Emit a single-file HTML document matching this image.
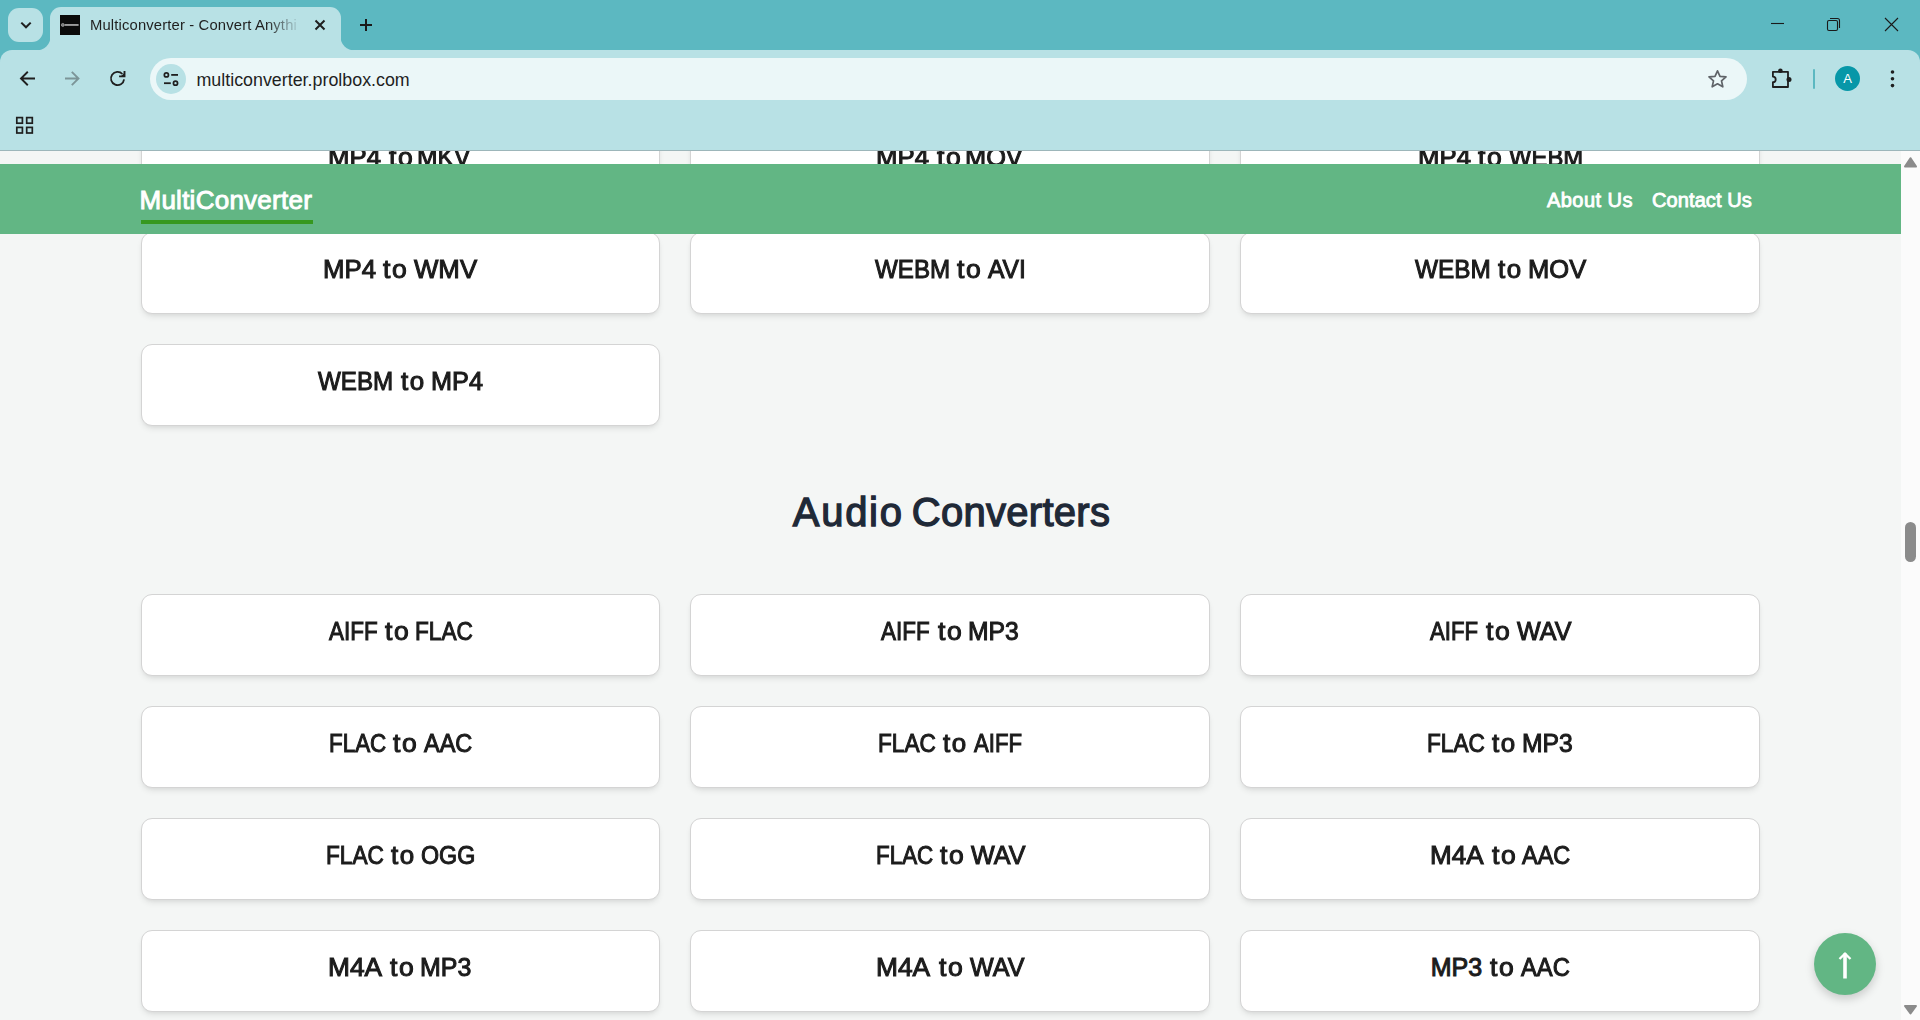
<!DOCTYPE html>
<html>
<head>
<meta charset="utf-8">
<style>
*{box-sizing:border-box;margin:0;padding:0}
html,body{width:1920px;height:1020px;overflow:hidden}
body{position:relative;font-family:"Liberation Sans",sans-serif;background:#f4f6f5}
.abs{position:absolute}
svg{position:absolute;overflow:visible}
#tabstrip{left:0;top:0;width:1920px;height:70px;background:#5cb8c1}
#dd{left:8px;top:8px;width:35px;height:34px;border-radius:11px;background:#b8e1e5}
#tab{left:50px;top:7px;width:291px;height:44px;background:#b8e1e5;border-radius:11px 11px 0 0}
#toolbar{left:0;top:50px;width:1920px;height:100px;background:#b8e1e5;border-radius:12px 12px 0 0}
#sep{left:0;top:150px;width:1920px;height:1px;background:#9db6ba}
#page{left:0;top:151px;width:1901px;height:869px;background:#f4f6f5;overflow:hidden}
#sb{left:1901px;top:151px;width:19px;height:869px;background:#fbfbfb}
#omni{left:150px;top:58px;width:1597px;height:42px;border-radius:21px;background:#ebf7f8}
#tune{left:156px;top:64px;width:30px;height:30px;border-radius:15px;background:#b8e1e5}
#url{left:196.5px;top:69px;font-size:17.85px;color:#1f1f1f;line-height:22px;white-space:nowrap}
#tabtitle{left:90px;top:16px;font-size:14.8px;letter-spacing:0.15px;color:#1f1f1f;line-height:18px;white-space:nowrap;width:212px;overflow:hidden;
  -webkit-mask-image:linear-gradient(to right,#000 0,#000 176px,transparent 211px);mask-image:linear-gradient(to right,#000 0,#000 176px,transparent 211px)}
#fav{left:60px;top:15px;width:20px;height:20px;background:#0b0b0b}
#avatar{left:1835px;top:66px;width:25px;height:25px;border-radius:50%;background:#0797a8;color:#fff;font-size:13px;line-height:25px;text-align:center}
#tsep{left:1813px;top:69px;width:2px;height:20px;background:#5cb8c1;border-radius:1px}
.card{position:absolute;background:#fff;border:1px solid #d4d4d4;border-radius:11px;box-shadow:0 4px 6px -1px rgba(0,0,0,0.08),0 2px 4px -2px rgba(0,0,0,0.08);height:82px;display:flex;align-items:center;justify-content:center;font-size:25px;font-weight:400;-webkit-text-stroke:0.6px #1c1c1c;color:#1c1c1c;white-space:nowrap;padding-bottom:7px}
.w{position:absolute;top:21px;line-height:30px;transform-origin:0 0;white-space:pre;-webkit-text-stroke:1px #1c1c1c}
.c1{left:141px;width:519px}
.c2{left:690px;width:520px}
.c3{left:1240px;width:520px}
#nav{left:0;top:13px;width:1901px;height:70px;background:#62b684}
#brand{left:139.5px;top:21px;font-size:26px;letter-spacing:0.25px;font-weight:400;-webkit-text-stroke:0.95px #fff;color:#fff;line-height:30px;white-space:nowrap}
#brandline{left:141px;top:56px;width:172px;height:4px;background:#36981f}
.navlink{top:24px;font-size:20px;letter-spacing:0.45px;font-weight:400;-webkit-text-stroke:0.85px #fff;color:#fff;line-height:24px;white-space:nowrap}
#h2{left:1px;top:338px;letter-spacing:0.5px;word-spacing:-3.5px;width:1901px;text-align:center;font-size:40px;font-weight:400;-webkit-text-stroke:1.3px #1f2937;color:#1f2937;line-height:46px}
#totop{left:1814px;top:782px;width:62px;height:62px;border-radius:50%;background:#62b684;box-shadow:0 4px 10px rgba(0,0,0,0.18)}
</style>
</head>
<body>
<div id="tabstrip" class="abs"></div>
<div id="dd" class="abs"></div>
<svg width="1920" height="50" style="left:0;top:0">
  <!-- chevron -->
  <path d="M21.3 22.6 L26 27.3 L30.7 22.6" fill="none" stroke="#1f1f1f" stroke-width="2"/>
  <!-- window controls -->
  <path d="M1771 23.5 H1784" stroke="#1a1a1a" stroke-width="1.1"/>
  <rect x="1827.5" y="20.5" width="10" height="10" rx="1.5" fill="none" stroke="#1a1a1a" stroke-width="1.1"/>
  <path d="M1830 18.5 H1837.5 Q1839.5 18.5 1839.5 20.5 V28" fill="none" stroke="#1a1a1a" stroke-width="1.1"/>
  <path d="M1885 18 L1898 31 M1898 18 L1885 31" stroke="#1a1a1a" stroke-width="1.1"/>
  <!-- plus -->
  <path d="M366 19 V31 M360 25 H372" stroke="#1a1a1a" stroke-width="2"/>
</svg>
<div id="toolbar" class="abs"></div>
<div id="tab" class="abs"></div>
<svg width="400" height="60" style="left:0;top:0">
  <!-- outward curves at tab bottom -->
  <path d="M36 50.5 A14 14 0 0 0 50.5 36 V50.5 Z" fill="#b8e1e5"/>
  <path d="M340.5 36 A14 14 0 0 0 355 50.5 H340.5 Z" fill="#b8e1e5"/>
  <!-- close x -->
  <path d="M315.5 20.5 L324.5 29.5 M324.5 20.5 L315.5 29.5" stroke="#1f1f1f" stroke-width="2"/>
</svg>
<div id="fav" class="abs"></div>
<svg width="20" height="20" style="left:60px;top:15px">
  <circle cx="2.8" cy="9.9" r="1.5" fill="#777" stroke="#b8b8b8" stroke-width="0.6"/>
  <rect x="4.6" y="9" width="14" height="1.9" fill="#9c9c9c"/>
</svg>
<div id="tabtitle" class="abs">Multiconverter - Convert Anythi</div>
<div id="omni" class="abs"></div>
<div id="tune" class="abs"></div>
<svg width="1920" height="150" style="left:0;top:0">
  <!-- back -->
  <path d="M35 78.5 H21.5 M27.8 71.8 L21 78.5 L27.8 85.2" fill="none" stroke="#1f1f1f" stroke-width="1.9"/>
  <!-- forward -->
  <path d="M65 78.5 H78.5 M71.8 71.8 L78.5 78.5 L71.8 85.2" fill="none" stroke="#7c9598" stroke-width="1.9"/>
  <!-- reload -->
  <path d="M124.1 79.4 A6.6 6.6 0 1 1 122.4 74" fill="none" stroke="#1f1f1f" stroke-width="1.8"/>
  <path d="M124.5 71 V76.4 H119.1" fill="none" stroke="#1f1f1f" stroke-width="1.9"/>
  <path d="M125 72.3 V77.1 H120.2 Z" fill="#1f1f1f"/>
  <!-- tune -->
  <circle cx="166.4" cy="74.9" r="2.05" fill="none" stroke="#1f1f1f" stroke-width="1.75"/>
  <path d="M171.2 74.9 H178" stroke="#1f1f1f" stroke-width="1.8"/>
  <circle cx="175.5" cy="83.2" r="2.05" fill="none" stroke="#1f1f1f" stroke-width="1.75"/>
  <path d="M164 83.2 H170.8" stroke="#1f1f1f" stroke-width="1.8"/>
  <!-- star -->
  <path d="M1717.5 70.8 L1720 76.3 L1726 76.9 L1721.5 80.9 L1722.8 86.8 L1717.5 83.8 L1712.2 86.8 L1713.5 80.9 L1709 76.9 L1715 76.3 Z" fill="none" stroke="#5f6368" stroke-width="1.7" stroke-linejoin="round"/>
  <!-- extension -->
  <path d="M1772.9 71.8 H1788 V87 H1772.9 V82.2 A2.8 2.8 0 0 0 1772.9 76.6 Z" fill="none" stroke="#1f1f1f" stroke-width="1.8" stroke-linejoin="round"/>
  <circle cx="1780.4" cy="70.7" r="2.3" fill="#1f1f1f"/>
  <circle cx="1789" cy="79.4" r="2.5" fill="#1f1f1f"/>
  <!-- menu dots -->
  <circle cx="1892.5" cy="72" r="1.8" fill="#1f1f1f"/>
  <circle cx="1892.5" cy="78.8" r="1.8" fill="#1f1f1f"/>
  <circle cx="1892.5" cy="85.6" r="1.8" fill="#1f1f1f"/>
  <!-- apps grid -->
  <rect x="16.8" y="117.6" width="5.6" height="5.6" fill="none" stroke="#1f1f1f" stroke-width="1.7"/>
  <rect x="26.7" y="117.6" width="5.6" height="5.6" fill="none" stroke="#1f1f1f" stroke-width="1.7"/>
  <rect x="16.8" y="127.4" width="5.6" height="5.6" fill="none" stroke="#1f1f1f" stroke-width="1.7"/>
  <rect x="26.7" y="127.4" width="5.6" height="5.6" fill="none" stroke="#1f1f1f" stroke-width="1.7"/>
</svg>
<div id="url" class="abs">multiconverter.prolbox.com</div>
<div id="tsep" class="abs"></div>
<div id="avatar" class="abs">A</div>
<div id="sep" class="abs"></div>

<div id="page" class="abs">
  <div class="card c1" style="top:-31px"><span class="w" style="left:186.34px;transform:scaleX(1.0306)">MP4</span><span class="w" style="left:246.70px;letter-spacing:1.6px;transform:scaleX(1.0602)">to</span><span class="w" style="left:275.43px;transform:scaleX(0.9865)">MKV</span></div>
  <div class="card c2" style="top:-31px"><span class="w" style="left:185.24px;transform:scaleX(1.0306)">MP4</span><span class="w" style="left:245.60px;letter-spacing:1.6px;transform:scaleX(1.0602)">to</span><span class="w" style="left:274.27px;transform:scaleX(1.0145)">MOV</span></div>
  <div class="card c3" style="top:-31px"><span class="w" style="left:176.74px;transform:scaleX(1.0306)">MP4</span><span class="w" style="left:237.10px;letter-spacing:1.6px;transform:scaleX(1.0602)">to</span><span class="w" style="left:267.80px;transform:scaleX(0.9539)">WEBM</span></div>
  <div class="card c1" style="top:81px"><span class="w" style="left:181.44px;transform:scaleX(1.0306)">MP4</span><span class="w" style="left:241.30px;letter-spacing:1.6px;transform:scaleX(1.0625)">to</span><span class="w" style="left:272.10px;transform:scaleX(1.0328)">WMV</span></div>
  <div class="card c2" style="top:81px"><span class="w" style="left:184.00px;transform:scaleX(0.9658)">WEBM</span><span class="w" style="left:266.30px;letter-spacing:1.6px;transform:scaleX(1.0602)">to</span><span class="w" style="left:297.00px;transform:scaleX(0.9865)">AVI</span></div>
  <div class="card c3" style="top:81px"><span class="w" style="left:174.10px;transform:scaleX(0.9737)">WEBM</span><span class="w" style="left:256.90px;letter-spacing:1.6px;transform:scaleX(1.0370)">to</span><span class="w" style="left:286.66px;transform:scaleX(1.0218)">MOV</span></div>
  <div class="card c1" style="top:193px"><span class="w" style="left:176.20px;transform:scaleX(0.9671)">WEBM</span><span class="w" style="left:259.00px;letter-spacing:1.6px;transform:scaleX(1.0370)">to</span><span class="w" style="left:288.78px;transform:scaleX(1.0102)">MP4</span></div>
  <div class="card c1" style="top:443px"><span class="w" style="left:186.60px;transform:scaleX(0.8981)">AIFF</span><span class="w" style="left:242.90px;letter-spacing:1.6px;transform:scaleX(1.0602)">to</span><span class="w" style="left:272.89px;transform:scaleX(0.9049)">FLAC</span></div>
  <div class="card c2" style="top:443px"><span class="w" style="left:190.25px;transform:scaleX(0.8972)">AIFF</span><span class="w" style="left:246.50px;letter-spacing:1.6px;transform:scaleX(1.0602)">to</span><span class="w" style="left:276.82px;transform:scaleX(0.9878)">MP3</span></div>
  <div class="card c3" style="top:443px"><span class="w" style="left:189.20px;transform:scaleX(0.8870)">AIFF</span><span class="w" style="left:244.90px;letter-spacing:1.6px;transform:scaleX(1.0648)">to</span><span class="w" style="left:276.20px;transform:scaleX(1.0037)">WAV</span></div>
  <div class="card c1" style="top:555px"><span class="w" style="left:186.91px;transform:scaleX(0.8967)">FLAC</span><span class="w" style="left:251.20px;letter-spacing:1.6px;transform:scaleX(1.0602)">to</span><span class="w" style="left:282.00px;transform:scaleX(0.9392)">AAC</span></div>
  <div class="card c2" style="top:555px"><span class="w" style="left:187.39px;transform:scaleX(0.9049)">FLAC</span><span class="w" style="left:252.20px;letter-spacing:1.6px;transform:scaleX(1.0370)">to</span><span class="w" style="left:283.00px;transform:scaleX(0.8870)">AIFF</span></div>
  <div class="card c3" style="top:555px"><span class="w" style="left:186.39px;transform:scaleX(0.9049)">FLAC</span><span class="w" style="left:251.20px;letter-spacing:1.6px;transform:scaleX(1.0370)">to</span><span class="w" style="left:281.02px;transform:scaleX(0.9878)">MP3</span></div>
  <div class="card c1" style="top:667px"><span class="w" style="left:184.29px;transform:scaleX(0.9049)">FLAC</span><span class="w" style="left:249.10px;letter-spacing:1.6px;transform:scaleX(1.0370)">to</span><span class="w" style="left:278.97px;transform:scaleX(0.9304)">OGG</span></div>
  <div class="card c2" style="top:667px"><span class="w" style="left:184.81px;transform:scaleX(0.8967)">FLAC</span><span class="w" style="left:249.10px;letter-spacing:1.6px;transform:scaleX(1.0602)">to</span><span class="w" style="left:279.80px;transform:scaleX(1.0037)">WAV</span></div>
  <div class="card c3" style="top:667px"><span class="w" style="left:188.72px;transform:scaleX(1.0420)">M4A</span><span class="w" style="left:250.70px;letter-spacing:1.6px;transform:scaleX(1.0602)">to</span><span class="w" style="left:281.40px;transform:scaleX(0.9392)">AAC</span></div>
  <div class="card c1" style="top:779px"><span class="w" style="left:186.10px;transform:scaleX(1.0520)">M4A</span><span class="w" style="left:248.10px;letter-spacing:1.6px;transform:scaleX(1.0602)">to</span><span class="w" style="left:277.90px;transform:scaleX(0.9980)">MP3</span></div>
  <div class="card c2" style="top:779px"><span class="w" style="left:185.49px;transform:scaleX(1.0530)">M4A</span><span class="w" style="left:247.50px;letter-spacing:1.6px;transform:scaleX(1.0648)">to</span><span class="w" style="left:278.80px;transform:scaleX(1.0037)">WAV</span></div>
  <div class="card c3" style="top:779px"><span class="w" style="left:189.80px;transform:scaleX(1.0000)">MP3</span><span class="w" style="left:249.10px;letter-spacing:1.6px;transform:scaleX(1.0602)">to</span><span class="w" style="left:279.80px;transform:scaleX(0.9510)">AAC</span></div>
  <div id="h2" class="abs"><span style="letter-spacing:1.7px">Audio</span> <span style="letter-spacing:0.28px">Converters</span></div>
  <div id="nav" class="abs">
    <div id="brand" class="abs">MultiConverter</div>
    <div id="brandline" class="abs"></div>
    <div class="abs navlink" style="left:1547px">About Us</div>
    <div class="abs navlink" style="left:1652px;letter-spacing:0.1px">Contact Us</div>
  </div>
  <div id="totop" class="abs">
    <svg width="62" height="62" style="left:0;top:0">
      <path d="M31 20.5 V45.5" stroke="#fff" stroke-width="3.6"/>
      <path d="M25.5 26 L31 20.6 L36.5 26" fill="none" stroke="#fff" stroke-width="2.3"/>
    </svg>
  </div>
</div>
<div id="sb" class="abs"></div>
<svg width="19" height="869" style="left:1901px;top:151px">
  <path d="M9.5 7.2 L15 15.6 H4 Z" fill="#8b8b8b" stroke="#8b8b8b" stroke-width="2" stroke-linejoin="round"/>
  <rect x="4" y="371" width="11" height="40" rx="5.5" fill="#8b8b8b"/>
  <path d="M9.5 862.5 L15 855 H4 Z" fill="#8b8b8b" stroke="#8b8b8b" stroke-width="2" stroke-linejoin="round"/>
</svg>
</body>
</html>
